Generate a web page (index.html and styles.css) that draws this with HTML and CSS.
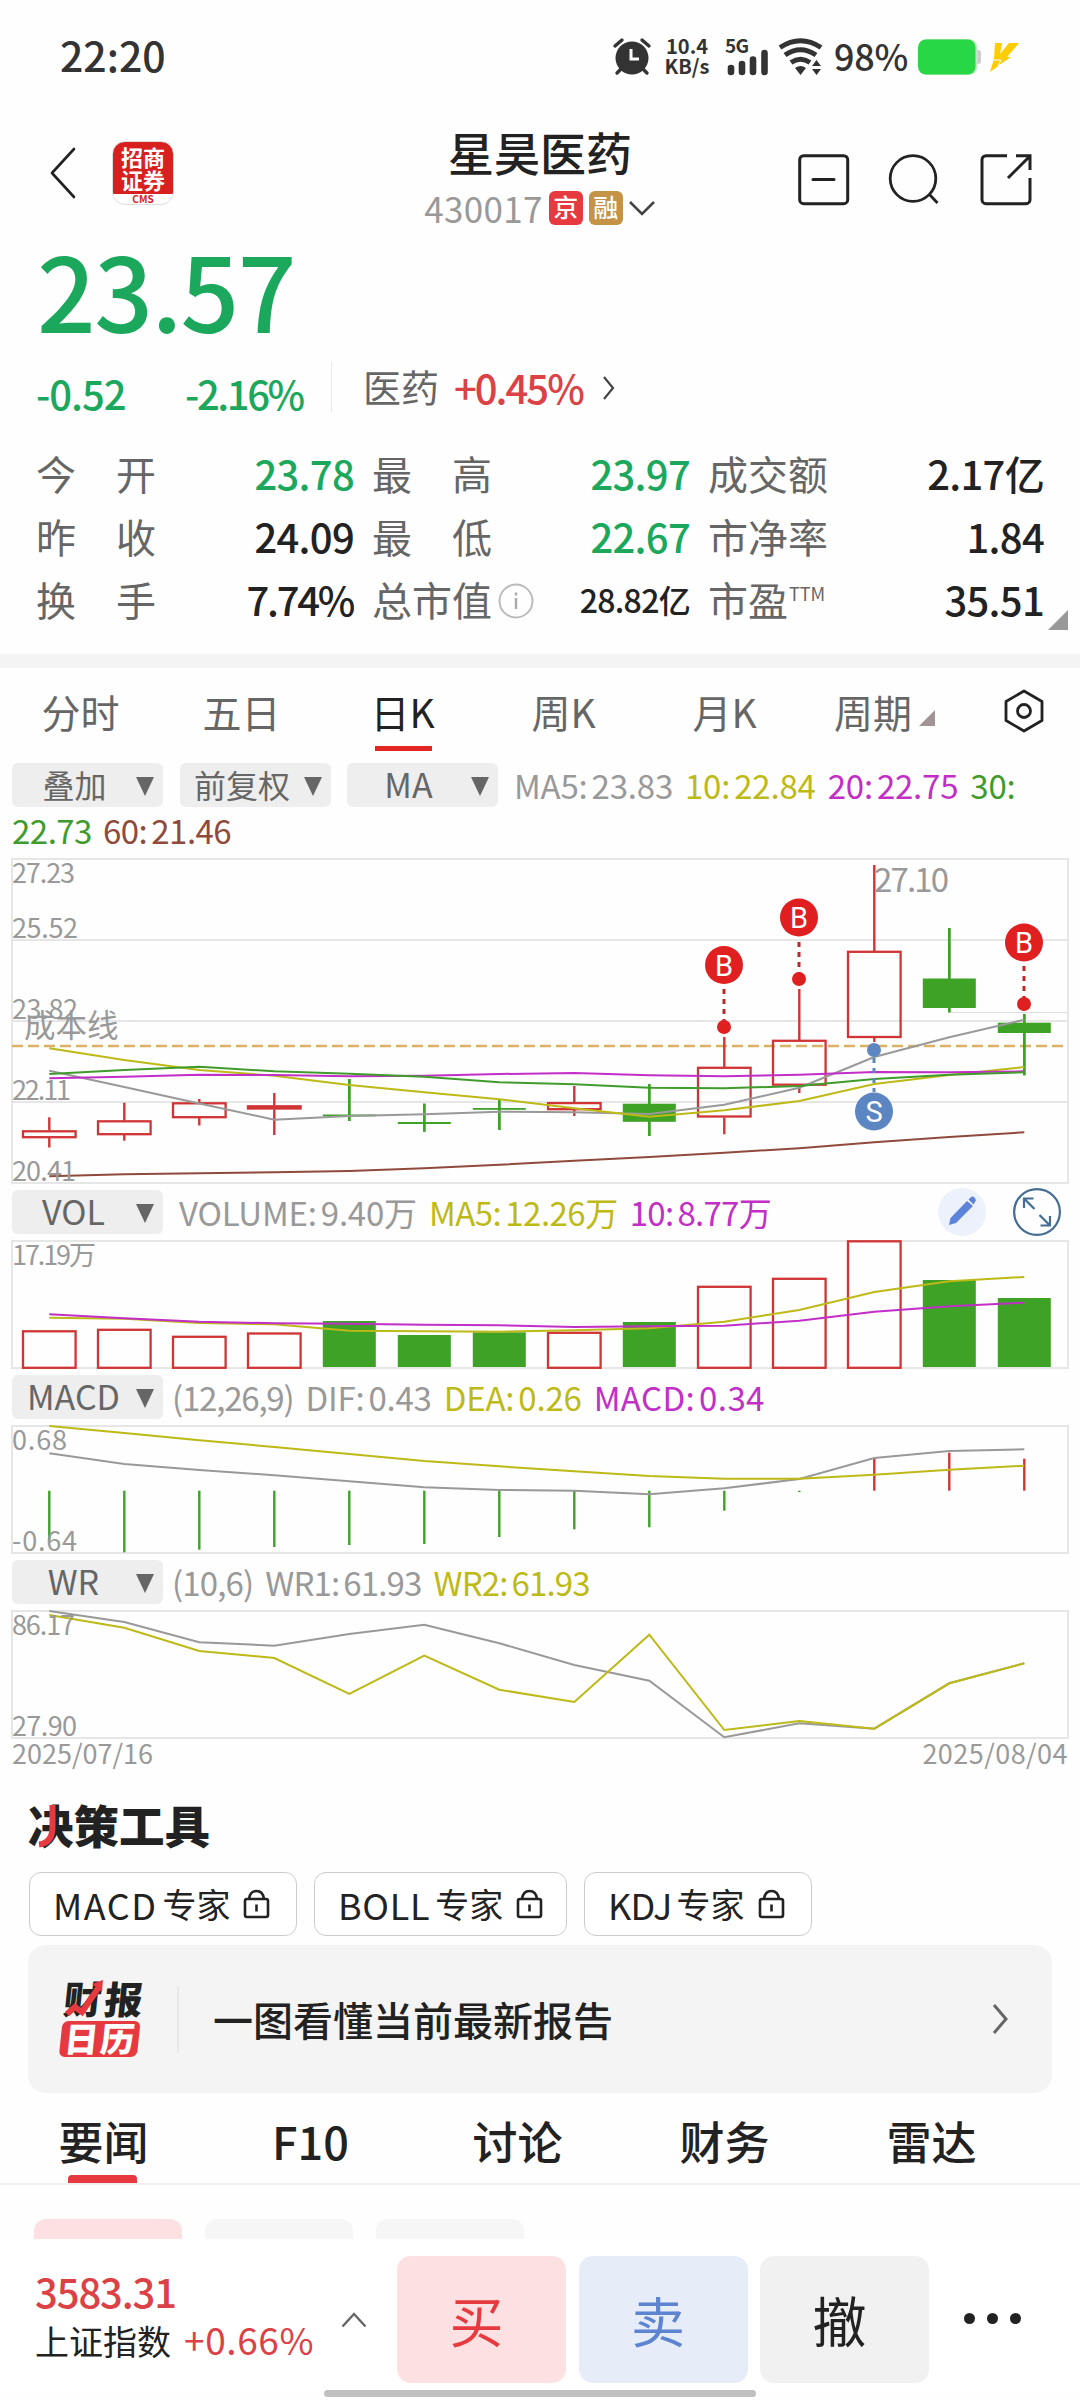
FILE: index.html
```html
<!DOCTYPE html>
<html lang="zh-CN">
<head>
  <meta charset="UTF-8">
  <title>星昊医药 430017</title>
  <link rel="stylesheet" href="styles.css">
</head>
<body>

  <div class="status">
    <span class="clock">22:20</span>
    <svg class="alarm" width="38" height="38" viewBox="0 0 38 38">
      <circle cx="19" cy="20" r="16.5" fill="#333"/>
      <path d="M2 8l7-6M36 8l-7-6M8 31l-4 4M30 31l4 4" stroke="#333" stroke-width="3.4" stroke-linecap="round"/>
      <path d="M18 11v10h8" fill="none" stroke="#fff" stroke-width="3"/>
    </svg>
    <span class="speed">10.4<br>KB/s</span>
    <svg class="signal" width="44" height="38" viewBox="0 0 44 38">
      <text x="0" y="15" class="net" textLength="24">5G</text>
      <path d="M6 30v4M17 26v8M28 21.500v12.500M39.500 15v19" stroke="#333" stroke-width="6.600" stroke-linecap="round"/>
    </svg>
    <svg class="wifi" width="46" height="38" viewBox="0 0 46 38">
      <g fill="none" stroke="#333" stroke-width="5">
        <path d="M2 9.500Q22.500-4 43 9.500"/>
        <path d="M7 17Q22.500 6.500 38 17"/>
        <path d="M13 24.500Q22.500 18 32 24.500"/>
      </g>
      <path d="M17 30q5.500-4 11 0l-5.500 7zM34 28l4.500-6 4.500 6zM34 31h9l-4.500 6z" fill="#333"/>
    </svg>
    <span class="percent">98%</span>
    <svg class="battery" width="64" height="38" viewBox="0 0 64 38">
      <rect x="57" y="12" width="6" height="14" rx="3" fill="#ccc"/>
      <rect x=".5" y="1" width="59" height="36" rx="8.500" fill="#c3e8c7"/>
      <rect x="0" y="1.500" width="57.500" height="35" rx="8" fill="#28d745"/>
    </svg>
    <svg class="bolt" width="32" height="32" viewBox="0 0 32 32">
      <path d="M6 2h7l-2 11 9-11h10L18 16h4L1 31l4-13z" fill="#fc0"/>
      <path d="M3 19h9l-3 6 12-7.500" fill="none" stroke="#fff" stroke-width="1"/>
    </svg>
  </div>

  <div class="header">
    <div class="header-left">
      <svg width="26" height="52" viewBox="0 0 26 52"><path d="M24 2L2 26l22 24" fill="none" stroke="#222" stroke-width="2.600" stroke-linecap="round" stroke-linejoin="round"/></svg>
      <div class="logo">
        <b>招商<br>证券</b>
        <i>CMS</i>
      </div>
    </div>
    <div class="header-title">
      <h1>星昊医药</h1>
      <div class="code">
        <span>430017</span><em class="tag red-tag">京</em><em class="tag gold-tag">融</em>
        <svg width="28" height="18" viewBox="0 0 28 18"><path d="M2 3l12 12L26 3" fill="none" stroke="#444" stroke-width="2.600"/></svg>
      </div>
    </div>
    <div class="header-right">
      <svg width="52" height="52" viewBox="0 0 52 52" fill="none" stroke="#222" stroke-width="3"><rect x="1.700" y="1.700" width="48" height="48" rx="4"/><path d="M15 25.500h21" stroke-linecap="round"/></svg>
      <svg width="52" height="52" viewBox="0 0 52 52" fill="none" stroke="#222" stroke-width="2.800"><circle cx="24" cy="24.500" r="22.800"/><path d="M40 40l8.500 9"/></svg>
      <svg width="52" height="52" viewBox="0 0 52 52" fill="none" stroke="#222" stroke-width="3"><path d="M27 1.700H6a4 4 0 0 0-4 4v40a4 4 0 0 0 4 4h40a4 4 0 0 0 4-4V24M36 1.700h14V16M49 3L28 24"/></svg>
    </div>
  </div>

  <div class="price green">23.57</div>
  <div class="change">
    <span class="green diff">-0.52</span>
    <span class="green rate">-2.16%</span>
    <span class="sector">医药</span>
    <span class="red sector-rate">+0.45%</span>
    <svg width="14" height="26" viewBox="0 0 14 26"><path d="M2 2l9 11-9 11" fill="none" stroke="#444" stroke-width="2.200"/></svg>
  </div>

  <div class="stats">
    <div class="stat"><span class="wide">今<s></s>开</span><b class="green">23.78</b></div>
    <div class="stat"><span class="wide">最<s></s>高</span><b class="green">23.97</b></div>
    <div class="stat"><span>成交额</span><b>2.17亿</b></div>
    <div class="stat"><span class="wide">昨<s></s>收</span><b>24.09</b></div>
    <div class="stat"><span class="wide">最<s></s>低</span><b class="green">22.67</b></div>
    <div class="stat"><span>市净率</span><b>1.84</b></div>
    <div class="stat"><span class="wide">换<s></s>手</span><b class="ratio">7.74%</b></div>
    <div class="stat"><span>总市值</span>
      <svg class="info" width="36" height="36" viewBox="0 0 36 36"><circle cx="18" cy="18" r="16.500" fill="none" stroke="#bbb" stroke-width="2"/><path d="M18 15v11M18 9.500v3" stroke="#aaa" stroke-width="2.400"/></svg>
      <b class="small">28.82亿</b></div>
    <div class="stat"><span>市盈</span><sup>TTM</sup><b>35.51</b></div>
    <i class="corner"></i>
  </div>

  <div class="band"></div>

  <div class="periods">
    <span>分时</span>
    <span>五日</span>
    <span class="active">日K</span>
    <span>周K</span>
    <span>月K</span>
    <span class="cycle">周期<i class="corner-small"></i></span>
    <svg width="42" height="44" viewBox="0 0 42 44" fill="none" stroke="#222" stroke-width="2.800" stroke-linejoin="round"><path d="M21 2l18 10.500v19L21 42 3 31.500v-19z"/><circle cx="21" cy="22" r="6.500"/></svg>
  </div>

  <div class="legend ma">
    <button class="select">叠加</button>
    <button class="select">前复权</button>
    <button class="select latin">MA</button>
    <span class="c-grey first">MA5:<u></u>23.83</span>
    <span class="c-yellow">10:<u></u>22.84</span>
    <span class="c-magenta">20:<u></u>22.75</span>
    <span class="c-green">30:</span>
  </div>
  <div class="legend-next">
    <span class="c-green">22.73</span>
    <span class="c-brown">60:<u></u>21.46</span>
  </div>

  <!-- K线 -->
  <svg class="chart" width="1080" height="326" viewBox="0 858 1080 326">
    <path class="grid" d="M12 859H1068V1183H12zM12 940H1068M12 1021H1068M12 1102H1068"/>
    <path d="M949 1012.500H1068" stroke="#ddd"/>
    <path d="M12 1046H1068" stroke="#d9b266" stroke-width="2.400" stroke-dasharray="11 5"/>
    <g id="candles"></g>
    <g id="averages" class="lines"></g>
    <g class="axis">
      <text x="12" y="883" textLength="63">27.23</text>
      <text x="12" y="938" textLength="66">25.52</text>
      <text x="12" y="1019" textLength="66">23.82</text>
      <text x="12" y="1100" textLength="59">22.11</text>
      <text x="12" y="1181" textLength="64">20.41</text>
    </g>
    <text x="24" y="1037" class="cost">成本线</text>
    <text x="874" y="892" class="peak" textLength="75">27.10</text>
    <g class="buy">
      <path d="M724 984v40M799 937v40M1024 961v40"/>
      <circle cx="724" cy="1027" r="7"/><circle cx="799" cy="979" r="7"/><circle cx="1024" cy="1004" r="7"/>
      <circle cx="724" cy="965" r="19"/><circle cx="799" cy="917.500" r="19"/><circle cx="1024" cy="942.500" r="19"/>
      <text x="724" y="975.500">B</text><text x="799" y="928">B</text><text x="1024" y="953">B</text>
    </g>
    <g class="sell">
      <path d="M874 1058v34"/>
      <circle cx="874" cy="1050" r="7"/><circle cx="874" cy="1111.500" r="19"/>
      <text x="874" y="1122">S</text>
    </g>
  </svg>

  <div class="legend vol">
    <button class="select latin">VOL</button>
    <span class="c-grey first">VOLUME:<u></u>9.40万</span>
    <span class="c-yellow">MA5:<u></u>12.26万</span>
    <span class="c-magenta">10:<u></u>8.77万</span>
    <svg class="tools" width="126" height="50" viewBox="0 0 126 50">
      <circle cx="26" cy="25" r="24" fill="#ecf1fb"/>
      <path d="M13 38l1.500-7L31 14l6 5-17 17zM32.500 12.500l2.500-2.500q2-1 3.500.500l1 1.500q1 1.500-.5 3l-1.500 2.500z" fill="#5c84d8"/>
      <g fill="none" stroke="#456d94" stroke-width="2.200"><circle cx="101" cy="25" r="22.900"/><path d="M88 21v-9.500h9.500M88.500 12l10 10M114 29v9.500h-9.500M113.500 38l-10-10"/></g>
    </svg>
  </div>
  <svg class="chart" width="1080" height="129" viewBox="0 1240 1080 129">
    <path class="grid" d="M12 1241H1068V1368H12z"/>
    <g class="axis"><text x="12" y="1265" textLength="84">17.19万</text></g>
    <g id="volumes"></g>
    <g id="volume-lines" class="lines"></g>
  </svg>

  <div class="legend sub">
    <button class="select latin">MACD</button>
    <span class="c-grey params">(12,26,9)</span>
    <span class="c-grey">DIF:<u></u>0.43</span>
    <span class="c-yellow">DEA:<u></u>0.26</span>
    <span class="c-magenta loose">MACD:<u></u>0.34</span>
  </div>
  <svg class="chart" width="1080" height="129" viewBox="0 1425 1080 129">
    <path class="grid" d="M12 1426H1068V1553H12z"/>
    <g id="macd-bars"></g>
    <g id="macd-lines" class="lines"></g>
    <g class="axis">
      <text x="12" y="1450" textLength="55">0.68</text>
      <text x="12" y="1551" textLength="65">-0.64</text>
    </g>
  </svg>

  <div class="legend sub wr">
    <button class="select latin">WR</button>
    <span class="c-grey">(10,6)</span>
    <span class="c-grey">WR1:<u></u>61.93</span>
    <span class="c-yellow">WR2:<u></u>61.93</span>
  </div>
  <svg class="chart" width="1080" height="129" viewBox="0 1610 1080 129">
    <path class="grid" d="M12 1611H1068V1738H12z"/>
    <g id="wr-lines" class="lines"></g>
    <g class="axis">
      <text x="12" y="1635" textLength="63">86.17</text>
      <text x="12" y="1736" textLength="65">27.90</text>
    </g>
  </svg>
  <div class="dates"><span>2025/07/16</span><span>2025/08/04</span></div>

  <h2 class="tools-title">决策工具
    <svg width="20" height="46" viewBox="0 0 20 46"><path d="M15.500 1v22Q15.500 39 2 40.500" fill="none" stroke="#e63a40" stroke-width="6"/></svg>
  </h2>
  <div class="experts">
    <div class="expert macd">MACD<span>专家</span><svg width="28" height="30" viewBox="0 0 28 30" fill="none" stroke="#222" stroke-width="2.600"><rect x="2" y="10" width="23" height="18" rx="2"/><path d="M6 10q1-8 7.500-8T21 10M13.500 15.500v7"/></svg></div>
    <div class="expert boll">BOLL<span>专家</span><svg width="28" height="30" viewBox="0 0 28 30" fill="none" stroke="#222" stroke-width="2.600"><rect x="2" y="10" width="23" height="18" rx="2"/><path d="M6 10q1-8 7.500-8T21 10M13.500 15.500v7"/></svg></div>
    <div class="expert kdj">KDJ<span>专家</span><svg width="28" height="30" viewBox="0 0 28 30" fill="none" stroke="#222" stroke-width="2.600"><rect x="2" y="10" width="23" height="18" rx="2"/><path d="M6 10q1-8 7.500-8T21 10M13.500 15.500v7"/></svg></div>
  </div>

  <div class="report">
    <svg class="report-logo" width="82" height="80" viewBox="0 0 82 80">
      <g transform="skewX(-6)">
        <text x="5" y="35" class="cal-dark" textLength="79">财报</text>
        <rect x="6" y="42" width="78" height="36" rx="6" fill="#e63a40"/>
        <text x="10" y="73" class="cal-light" textLength="70">日历</text>
      </g>
      <path d="M6 35l8-7 7 5 17-25" fill="none" stroke="#e63a40" stroke-width="6"/>
      <path d="M31 5l11-4-1 12z" fill="#e63a40"/>
    </svg>
    <div class="report-text">一图看懂当前最新报告</div>
    <svg width="20" height="34" viewBox="0 0 20 34"><path d="M3 3l12 14L3 31" fill="none" stroke="#666" stroke-width="3"/></svg>
  </div>

  <div class="news-tabs">
    <span class="current">要闻</span>
    <span>F10</span>
    <span>讨论</span>
    <span>财务</span>
    <span>雷达</span>
  </div>
  <div class="chips"><i class="on"></i><i></i><i></i></div>

  <div class="bottom">
    <div class="index">
      <div class="red index-value">3583.31</div>
      <div class="index-name">上证指数<span class="red">+0.66%</span></div>
    </div>
    <svg class="caret" width="26" height="16" viewBox="0 0 26 16"><path d="M1.500 14.500L13 2l11.500 12.500" fill="none" stroke="#666" stroke-width="2.400"/></svg>
    <div class="action buy-btn">买</div>
    <div class="action sell-btn">卖</div>
    <div class="action cancel-btn">撤</div>
    <div class="more"><i></i><i></i><i></i></div>
  </div>
  <div class="home"></div>

  <script>
    const RED = '#d03434';
    const GREEN = '#3da226';
    const NS = 'http://www.w3.org/2000/svg';
    const cx = i => 49.3 + i * 75;

    function add(id, tag, attrs) {
      const el = document.createElementNS(NS, tag);
      for (const k in attrs) el.setAttribute(k, attrs[k]);
      document.getElementById(id).appendChild(el);
    }

    function line(id, color, ys) {
      const points = ys.map((y, i) => `${cx(i)},${y}`).join(' ');
      add(id, 'polyline', { points, stroke: color });
    }

    function stick(id, i, y1, y2, color) {
      add(id, 'path', { d: `M${cx(i)} ${y1}V${y2}`, stroke: color, 'stroke-width': 2.4 });
    }

    function box(id, i, top, bottom, up) {
      if (up) {
        add(id, 'rect', { x: cx(i) - 26.3, y: top + 0.8, width: 52.6, height: Math.max(bottom - top - 1.6, 1), fill: 'none', stroke: RED, 'stroke-width': 2.3 });
      } else {
        add(id, 'rect', { x: cx(i) - 26.5, y: top, width: 53, height: bottom - top, fill: GREEN });
      }
    }

    // [最高, 实体上沿, 实体下沿, 最低, 是否上涨]
    const candles = [
      [1117.3, 1130.5, 1138, 1147.5, 1], [1102.7, 1120.5, 1135, 1140.7, 1],
      [1099, 1102.5, 1118, 1125.5, 1], [1093, 1105.5, 1109.3, 1135, 1],
      [1079, 1114.5, 1116.3, 1121, 0], [1103.7, 1122, 1124, 1131.7, 0],
      [1100, 1108, 1109.8, 1130, 0], [1086, 1102.3, 1110, 1116, 1],
      [1084, 1103.7, 1121.8, 1136, 0], [1037, 1067, 1117.3, 1134.3, 1],
      [989, 1040, 1085.5, 1093, 1], [865, 951, 1037.8, 1042, 1],
      [928, 978.5, 1008, 1012.3, 0], [1014, 1022.7, 1033, 1075.3, 0]
    ];
    candles.forEach(([high, top, bottom, low, up], i) => {
      const color = up ? RED : GREEN;
      stick('candles', i, high, top, color);
      stick('candles', i, bottom, low, color);
      if (!up) stick('candles', i, high, low, color);
      box('candles', i, top, bottom, up);
    });

    line('averages', '#999', [1070.7, 1087, 1103.5, 1119.7, 1116, 1114.3, 1111.7, 1112.3, 1114, 1104.7, 1087.7, 1057, 1037.3, 1019.7]);
    line('averages', '#bdb916', [1048.3, 1060, 1070, 1075.7, 1085, 1092.3, 1099.3, 1108.3, 1116.7, 1110.3, 1101, 1084, 1075, 1067]);
    line('averages', '#c22fc8', [1078.3, 1076.7, 1074.7, 1075, 1076.3, 1075.7, 1074, 1073, 1075.3, 1076.3, 1074.7, 1072, 1072.3, 1071.3]);
    line('averages', '#3f9c2c', [1074, 1070, 1066.7, 1071.3, 1073.7, 1076.7, 1082.3, 1084.3, 1087.7, 1088.3, 1086, 1079, 1074.7, 1072.3]);
    line('averages', '#8f4a3c', [1176.2, 1174.3, 1173.3, 1172.3, 1171, 1168.3, 1164.7, 1160.7, 1157, 1152.7, 1148.3, 1142.3, 1137, 1132.3]);

    const volumes = [
      [1330.5, 1], [1329, 1], [1336, 1], [1332.7, 1], [1321, 0], [1335, 0], [1332.3, 0],
      [1332, 1], [1322, 0], [1286, 1], [1278, 1], [1240.5, 1], [1280, 0], [1298, 0]
    ];
    volumes.forEach(([top, up], i) => box('volumes', i, top, up ? 1368.6 : 1367, up));
    line('volume-lines', '#bdb916', [1317.7, 1318.7, 1323, 1324.3, 1330.7, 1331.3, 1331.7, 1330.3, 1328.3, 1321.7, 1310, 1292, 1281.3, 1277]);
    line('volume-lines', '#c22fc8', [1314.3, 1318.3, 1321.7, 1323.3, 1323.7, 1324.7, 1325.3, 1327, 1326.3, 1325.7, 1320.7, 1311.7, 1306.3, 1302.7]);

    [1540, 1552.3, 1549.7, 1547, 1545, 1544, 1537, 1529.3, 1527.3, 1510.7, 1492, 1458, 1452.7, 1458.7]
      .forEach((y, i) => stick('macd-bars', i, 1490.7, y, y > 1490 ? GREEN : RED));
    line('macd-lines', '#999', [1453.3, 1464, 1470, 1475.3, 1481.3, 1487.3, 1490, 1490.7, 1494.3, 1488.3, 1479, 1458, 1451, 1449.3]);
    line('macd-lines', '#bdb916', [1426, 1433, 1440.3, 1447, 1454, 1461, 1466.3, 1471.3, 1476, 1478.7, 1478.7, 1474.7, 1469.7, 1465.7]);

    line('wr-lines', '#999', [1611, 1622, 1642.3, 1645.7, 1634, 1624.7, 1643.3, 1665, 1680.7, 1737.3, 1723.3, 1728.7, 1683.3, 1663.3]);
    line('wr-lines', '#bdb916', [1615, 1627.7, 1651, 1658, 1694, 1655.7, 1689.7, 1702, 1634.7, 1730, 1721, 1728.7, 1683.3, 1663.3]);
  </script>
</body>
</html>
```
FILE: styles.css
```css
* {
  box-sizing: border-box;
}

body {
  margin: 0;
  width: 1080px;
  height: 2400px;
  overflow: hidden;
  background: #fefefe;
  color: #222;
  font-family: "Noto Sans CJK SC", "Noto Sans", sans-serif;
}

svg {
  display: block;
  flex: none;
  overflow: visible;
}

i, em { font-style: normal; }

.green { color: #1ba85c; }
.red { color: #dc4146; }

/* status bar */
.status {
  display: flex;
  align-items: center;
  height: 114px;
  padding-left: 60px;
  color: #333;
}

.clock {
  width: 553px;
  margin-top: -6px;
  font-size: 41px;
  font-weight: 500;
}

.speed {
  width: 50px;
  margin: -3px 0 0 11px;
  font-size: 20px;
  font-weight: 700;
  line-height: 20px;
  text-align: center;
  white-space: nowrap;
}

.signal { margin-left: 13px; }

.net {
  font-size: 19px;
  font-weight: 700;
  fill: #333;
}

.wifi { margin-left: 9px; }

.percent {
  width: 76px;
  margin: -5px 0 0 10px;
  font-size: 36px;
  font-weight: 500;
  letter-spacing: -.3px;
}

.battery { margin-left: 8px; }
.bolt { margin-left: 7px; }

/* header */
.header {
  display: grid;
  grid-template-columns: 300px 480px 300px;
  height: 126px;
}

.header-left {
  display: flex;
  align-items: flex-start;
  padding: 33px 0 0 50px;
}

.logo {
  width: 62px;
  height: 64px;
  margin: -6px 0 0 36px;
  border: 1px solid #ddd;
  border-radius: 13px;
  background: linear-gradient(#d8201f 52px, #fff 52px);
  text-align: center;
}

.logo b {
  display: block;
  padding-top: 3px;
  color: #fff;
  font-size: 22px;
  line-height: 23px;
}

.logo i {
  display: block;
  margin-top: 1px;
  color: #d8201f;
  font-size: 10px;
  font-weight: 700;
  line-height: 13px;
}

.header-title { text-align: center; }

h1 {
  margin: 11px 0 0;
  font-size: 46px;
  font-weight: 500;
  line-height: 52px;
}

.code {
  display: flex;
  align-items: center;
  justify-content: center;
  height: 38px;
  margin-top: 12px;
  color: #999;
  font-size: 35px;
  line-height: 34px;
}

.code span { margin-top: -1px; letter-spacing: .3px; }
.code svg { margin-left: 5px; }

.tag {
  width: 34px;
  height: 34px;
  margin-left: 6px;
  border-radius: 6px;
  color: #fff;
  font-size: 25px;
  font-weight: 500;
  line-height: 31px;
}

.red-tag { background: #e63a40; }
.gold-tag { background: #c49345; }

.header-right {
  display: flex;
  gap: 39px;
  padding: 40px 0 0 18px;
}

/* price */
.price {
  height: 120px;
  padding-left: 37px;
  font-size: 103px;
  font-weight: 500;
  line-height: 97px;
  letter-spacing: -1.5px;
}

.change {
  display: flex;
  align-items: center;
  height: 60px;
  padding-left: 36px;
  font-size: 40px;
  font-weight: 500;
  line-height: 50px;
}

.diff { width: 149px; margin-top: 5px; letter-spacing: -1px; }
.rate { width: 146px; margin-top: 5px; letter-spacing: -2.400px; }

.sector {
  height: 50px;
  margin-top: -6px;
  padding-left: 31px;
  border-left: 1px solid #e8e8e8;
  color: #666;
  font-size: 38px;
  font-weight: 400;
  line-height: 48px;
}

.sector-rate { margin: -6px 0 0 15px; letter-spacing: -2px; }
.change svg { margin: -4px 0 0 19px; }

.stats {
  display: grid;
  grid-template-columns: 317px 317px 335px;
  column-gap: 19px;
  grid-auto-rows: 63px;
  position: relative;
  height: 234px;
  padding: 22px 35px 0 37px;
}

.stat {
  display: flex;
  align-items: center;
  line-height: 63px;
  color: #666;
  font-size: 40px;
}

.stat > span { margin-left: -1px; }
.wide s { display: inline-block; width: 40px; }

.stat b {
  margin-left: auto;
  color: #222;
  font-weight: 500;
  letter-spacing: -.700px;
}

.stat b.green { color: #1ba85c; }
.stat b.small { font-size: 32px; }
.stat b.ratio { letter-spacing: -2.300px; margin-right: 1px; }
.info { margin: 3px 0 0 6px; }

sup {
  font-size: 18px;
  line-height: 20px;
  margin-top: -14px;
  margin-left: 1px;
}

.corner {
  position: absolute;
  right: 12px;
  bottom: 24px;
  border: 10px solid;
  border-color: transparent #999 #999 transparent;
}

.band {
  height: 14px;
  background: #f4f4f4;
}

/* period tabs */
.periods {
  display: flex;
  height: 95px;
  padding-top: 20px;
  color: #666;
  font-size: 39px;
  line-height: 46px;
}

.periods span {
  width: 161px;
  text-align: center;
}

.periods .active {
  position: relative;
  color: #222;
}

.active::after {
  content: "";
  position: absolute;
  left: 53px;
  bottom: 12px;
  width: 57px;
  height: 5px;
  background: #e42622;
}

.periods .cycle {
  padding-left: 29px;
  text-align: left;
}

.corner-small {
  display: inline-block;
  margin: 0 0 2px 7px;
  border: 8px solid;
  border-color: transparent #a09494 #a09494 transparent;
}

.periods svg { margin: 1px 0 0 37px; }

/* indicator rows */
.legend {
  display: flex;
  align-items: center;
  height: 44px;
  padding-left: 12px;
  font-size: 33px;
  line-height: 40px;
  letter-spacing: -.200px;
  white-space: nowrap;
}

.legend > span {
  margin-top: -1px;
  margin-left: 12px;
}

.legend .first { margin-left: 16px; }
u { display: inline-block; width: 4px; }

.legend-next {
  display: flex;
  gap: 11px;
  height: 51px;
  padding: 1px 0 0 12px;
  font-size: 33px;
  line-height: 44px;
  letter-spacing: -.500px;
}

.select {
  position: relative;
  width: 151px;
  height: 44px;
  margin: 0;
  padding: 0 26px 2px 0;
  border: 0;
  border-radius: 6px;
  background: #eee;
  color: #666;
  font-family: inherit;
  font-size: 32px;
  line-height: 40px;
}

.select.latin { font-size: 34px; padding-right: 28px; }

.select::after {
  content: "";
  position: absolute;
  right: 9px;
  top: 14px;
  border: 9.500px solid transparent;
  border-top: 19px solid #666;
  border-bottom: 0;
}

.ma .select + .select { margin-left: 16.500px; }
.vol, .sub { margin-top: 6px; }
.sub > span:nth-of-type(1) { margin-left: 9px; }
.vol .c-magenta { letter-spacing: -.700px; }
.vol .c-yellow { letter-spacing: -.500px; }
.legend .params { letter-spacing: -1.200px; }
.legend .loose { letter-spacing: .400px; }
.wr > span { letter-spacing: -.850px; }

.tools { margin-left: auto; margin-right: 18px; }

.c-grey { color: #999; }
.c-yellow { color: #bdb916; }
.c-magenta { color: #c22fc8; }
.c-green { color: #3f9c2c; }
.c-brown { color: #8f4a3c; }

.vol + .chart, .sub + .chart { margin-top: 6px; }

.grid {
  fill: none;
  stroke: #e6e6e6;
  stroke-width: 2;
}

.axis text {
  font-size: 27px;
  fill: #999;
}

.cost { font-size: 31.500px; fill: #999; }
.peak { font-size: 33px; fill: #999; }

.lines polyline {
  fill: none;
  stroke-width: 2;
}

.buy { fill: #e02020; stroke: none; }
.sell { fill: #5b86c2; stroke: none; }
.buy path { stroke: #b82a2a; stroke-width: 3; stroke-dasharray: 5 5; stroke-dashoffset: 5; }
.sell path { stroke: #5b86c2; stroke-width: 3; stroke-dasharray: 5 5; }

.buy text, .sell text {
  fill: #fff;
  font-family: Roboto, sans-serif;
  font-size: 29px;
  text-anchor: middle;
}

.dates {
  display: flex;
  justify-content: space-between;
  padding: 0 12px;
  color: #999;
  font-size: 27px;
  line-height: 28px;
}

.dates span + span { letter-spacing: .450px; }

/* tools */
.tools-title {
  position: relative;
  height: 105px;
  margin: 0;
  padding: 30px 0 0 28px;
  font-size: 45.500px;
  font-weight: 900;
  line-height: 54px;
}

.tools-title svg {
  position: absolute;
  left: 37px;
  top: 37px;
}

.experts {
  display: flex;
  gap: 17px;
  padding-left: 29px;
}

.expert {
  display: flex;
  align-items: center;
  height: 64px;
  padding-left: 23px;
  border: 1px solid #ccc;
  border-radius: 12px;
  background: #fff;
  font-size: 36px;
  line-height: 58px;
}

.macd { width: 268px; letter-spacing: 1.500px; }
.boll { width: 253px; letter-spacing: .700px; }
.kdj { width: 228px; letter-spacing: -.700px; }
.expert span { margin-left: 5px; font-size: 34px; letter-spacing: 0; }
.expert svg { margin-left: 13px; }

.report {
  display: flex;
  align-items: center;
  width: 1024px;
  height: 148px;
  margin: 9px 0 0 28px;
  padding: 0 41px 0 33px;
  border-radius: 18px;
  background: #f4f4f4;
}

.cal-dark, .cal-light { font-size: 38px; font-weight: 900; fill: #222; }
.cal-light { font-size: 34px; fill: #fff; }

.report-text {
  flex: 1;
  margin-left: 34px;
  padding: 0 0 1px 34px;
  border-left: 2px solid #e8e8e8;
  font-size: 40px;
  font-weight: 500;
  line-height: 66px;
}

.news-tabs {
  display: flex;
  height: 92px;
  border-bottom: 2px solid #f0f0f0;
  font-size: 45px;
  font-weight: 500;
  line-height: 96px;
}

.news-tabs span {
  width: 207px;
  height: 90px;
  text-align: center;
}

.current { position: relative; }

.current::after {
  content: "";
  position: absolute;
  left: 68px;
  bottom: 0;
  width: 69px;
  height: 8px;
  border-radius: 4px 4px 0 0;
  background: #e63a40;
}

.chips {
  display: flex;
  gap: 23px;
  height: 54px;
  padding: 34px 0 0 34px;
}

.chips i {
  width: 148px;
  border-radius: 12px 12px 0 0;
  background: #f6f6f6;
}

.chips .on { background: #fde1e2; }

/* bottom bar */
.bottom {
  display: flex;
  height: 151px;
  padding: 17px 0 0 35px;
  background: #fff;
}

.index { width: 306px; }

.index-value {
  padding-top: 10px;
  font-size: 40px;
  font-weight: 500;
  line-height: 50px;
  letter-spacing: -1.100px;
}

.index-name {
  font-size: 34px;
  line-height: 47px;
}

.index-name span {
  margin-left: 13px;
  font-size: 37px;
  letter-spacing: .600px;
}

.caret { margin: 56px 30px 0 0; }

.action {
  width: 169px;
  height: 127px;
  margin-right: 12.500px;
  padding-right: 10px;
  border-radius: 14px;
  font-size: 54px;
  line-height: 127px;
  text-align: center;
}

.buy-btn { background: #fde1e2; color: #e63a40; }
.sell-btn { background: #e6edf9; color: #5c84d0; }
.cancel-btn { background: #f1f1f1; }

.more {
  display: flex;
  gap: 12px;
  padding: 57px 0 0 22px;
}

.more i {
  width: 11px;
  height: 11px;
  border-radius: 50%;
  background: #222;
}

.home {
  width: 432px;
  height: 7px;
  margin-left: 324px;
  border-radius: 4px;
  background: #c0c0c0;
}
```
